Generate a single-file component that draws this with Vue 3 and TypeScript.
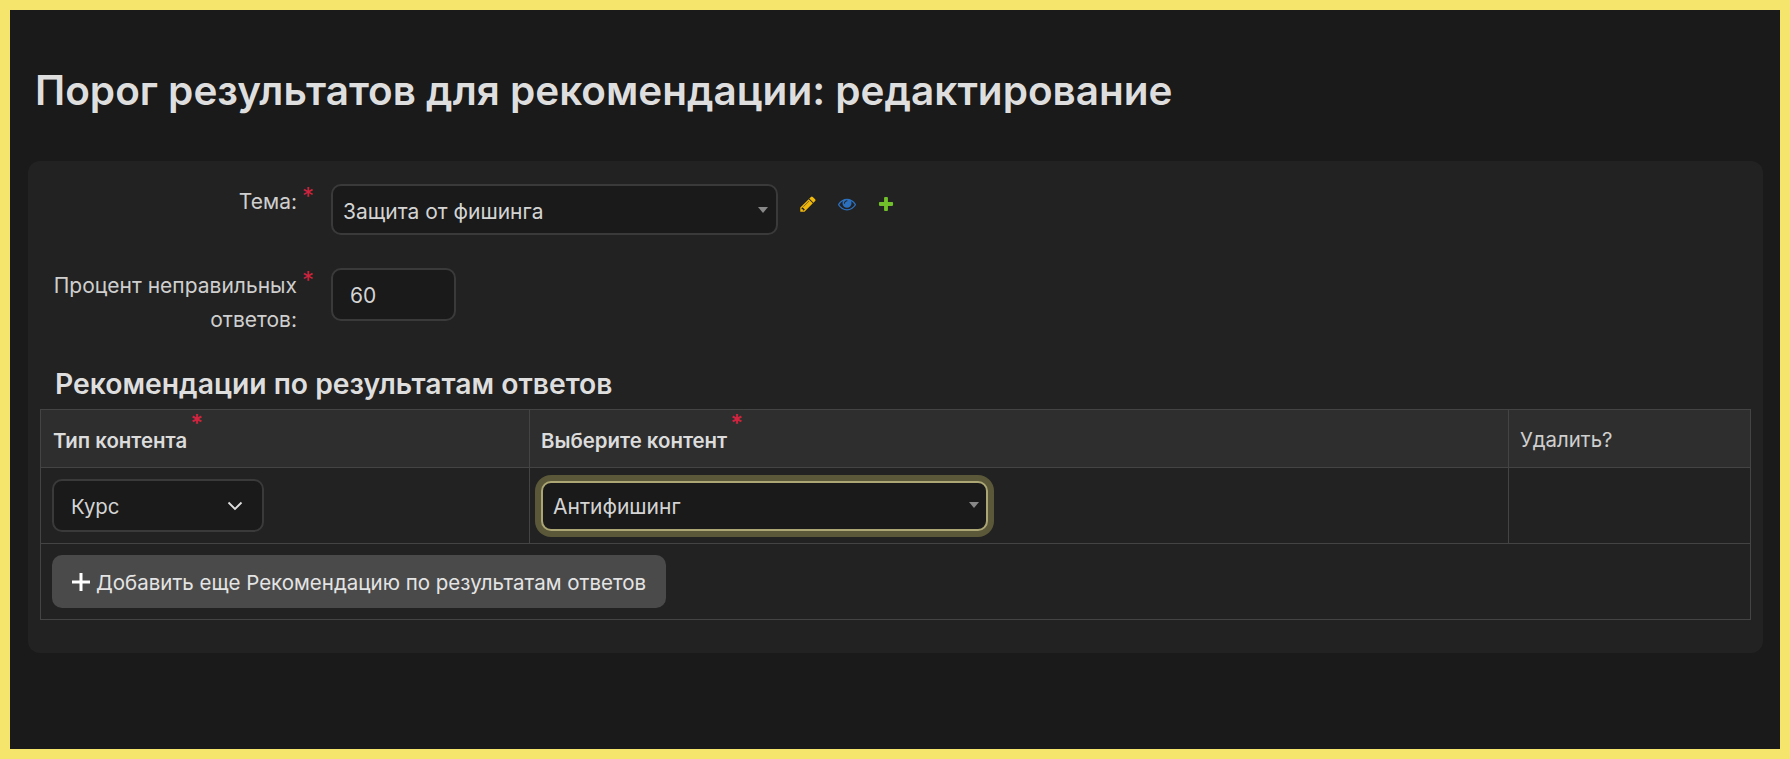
<script setup lang="ts">
const title = 'Порог результатов для рекомендации: редактирование'
</script>

<template>
  <div class="page">
    <h1 class="title">{{ title }}</h1>
    <form class="card" @submit.prevent>
      <div class="field topic">
        <label class="label"><span>Тема:</span><i class="req">*</i></label>
        <div class="select wide">
          <span>Защита от фишинга</span>
          <b class="caret"></b>
        </div>
        <div class="links">
          <svg viewBox="0 0 1792 1792" class="icon"><path fill="#efb80b" d="M491 1536l91-91-235-235-91 91v107h128v128h107zm523-928q0-22-22-22-10 0-17 7l-542 542q-7 7-7 17 0 22 22 22 10 0 17-7l542-542q7-7 7-17zm-54-192l416 416-832 832h-416v-416zm683 96q0 53-37 90l-166 166-416-416 166-165q36-38 90-38 53 0 91 38l235 234q37 39 37 91z"/></svg>
          <svg viewBox="0 0 1792 1792" class="icon"><path fill="#2b70bf" d="M1664 960q-152-236-381-353 61 104 61 225 0 185-131.5 316.5t-316.5 131.5-316.5-131.5-131.5-316.5q0-121 61-225-229 117-381 353 133 205 333.5 326.5t434.5 121.5 434.5-121.5 333.5-326.5zm-720-384q0-20-14-34t-34-14q-125 0-214.5 89.5t-89.5 214.5q0 20 14 34t34 14 34-14 14-34q0-86 61-147t147-61q20 0 34-14t14-34zm848 384q0 34-20 69-140 230-376.5 368.5t-499.5 138.5-499.5-139-376.5-368q-20-35-20-69t20-69q140-229 376.5-368t499.5-139 499.5 139 376.5 368q20 35 20 69z"/></svg>
          <svg viewBox="0 0 1792 1792" class="icon"><path fill="#70bf2b" d="M1600 796v192q0 40-28 68t-68 28h-416v416q0 40-28 68t-68 28h-192q-40 0-68-28t-28-68v-416h-416q-40 0-68-28t-28-68v-192q0-40 28-68t68-28h416v-416q0-40 28-68t68-28h192q40 0 68 28t28 68v416h416q40 0 68 28t28 68z"/></svg>
        </div>
      </div>
      <div class="field percent">
        <label class="label"><span>Процент неправильных ответов:</span><i class="req">*</i></label>
        <div class="number">60</div>
      </div>

      <h2 class="subtitle">Рекомендации по результатам ответов</h2>
      <table class="grid">
        <colgroup>
          <col class="c1" />
          <col class="c2" />
          <col />
        </colgroup>
        <thead>
          <tr>
            <th class="strong"><span class="th-wrap">Тип контента<i class="req th-req">*</i></span></th>
            <th class="strong"><span class="th-wrap">Выберите контент<i class="req th-req">*</i></span></th>
            <th>Удалить?</th>
          </tr>
        </thead>
        <tbody>
          <tr class="row">
            <td>
              <div class="native">
                <span>Курс</span>
                <svg class="chevron" viewBox="0 0 16 10"><path d="M1.5 1.5 8 8l6.5-6.5" fill="none" stroke="#dedede" stroke-width="1.8" /></svg>
              </div>
            </td>
            <td>
              <div class="select focused">
                <span>Антифишинг</span>
                <b class="caret"></b>
              </div>
            </td>
            <td></td>
          </tr>
          <tr class="add-row">
            <td colspan="3">
              <button type="button" class="add">
                <svg class="plus" viewBox="0 0 20 20"><path d="M10 1v18M1 10h18" stroke="#fff" stroke-width="3" fill="none" /></svg>
                <span class="add-text">Добавить еще Рекомендацию по результатам ответов</span>
              </button>
            </td>
          </tr>
        </tbody>
      </table>
    </form>
  </div>
</template>

<style>
html, body { margin: 0; background: #1a1a1a; }
</style>

<style scoped>
.page {
  box-sizing: border-box;
  width: 1790px;
  height: 759px;
  border: 10px solid #f6e56c;
  background: #1a1a1a;
  padding: 0 17px 0 18px;
  font-family: Inter, "Noto Sans", sans-serif;
  font-size: 21px;
  color: #d4d4d4;
  overflow: hidden;
}
.title {
  margin: 0 0 0 7px;
  padding-top: 57px;
  height: 151px;
  box-sizing: border-box;
  font-size: 40.5px;
  line-height: 48px;
  font-weight: 600;
  color: #dedede;
}
.card {
  background: #222;
  border-radius: 12px;
  height: 492px;
  box-sizing: border-box;
  padding: 23px 12px 0;
}
.field { display: flex; align-items: flex-start; }
.label {
  width: 291px;
  flex: none;
  display: flex;
  justify-content: flex-end;
  text-align: right;
  line-height: 34px;
  padding-top: 1px;
  color: #cfcfcf;
}
.label span { display: block; max-width: 250px; }
.req {
  font-style: normal;
  color: #d0233f;
  font-size: 24px;
  line-height: 24px;
  width: 34px;
  flex: none;
  padding-left: 5px;
  box-sizing: border-box;
  text-align: left;
}
.select, .native, .number {
  box-sizing: border-box;
  background: #1a1a1a;
  border: 2px solid #3a3a3a;
  border-radius: 10px;
  display: flex;
  align-items: center;
  color: #d4d4d4;
}
.select { position: relative; padding-left: 10px; }
.wide { width: 447px; height: 51px; padding-top: 3px; }
.caret {
  position: absolute;
  right: 8px;
  top: 50%;
  margin-top: -3px;
  border-left: 5.5px solid transparent;
  border-right: 5.5px solid transparent;
  border-top: 6px solid #888;
}
.links {
  display: flex;
  gap: 21px;
  margin: 11px 0 0 21px;
}
.icon { width: 18px; height: 18px; display: block; }
.percent { margin-top: 33px; }
.number {
  width: 125px;
  height: 53px;
  padding: 2px 0 0 17px;
}
.subtitle {
  margin: 0 0 0 15px;
  padding-top: 31px;
  font-size: 28.3px;
  line-height: 32px;
  height: 72px;
  box-sizing: border-box;
  font-weight: 600;
  color: #dedede;
}
.grid {
  border-collapse: collapse;
  table-layout: fixed;
  width: 1711px;
}
.c1 { width: 489px; }
.c2 { width: 979px; }
th, td {
  border: 1px solid #444;
  padding: 0;
  text-align: left;
  vertical-align: middle;
}
th {
  background: #2e2e2e;
  height: 56px;
  font-weight: 400;
  font-size: 20.4px;
  padding: 1px 0 0 11px;
  color: #cfcfcf;
}
.strong { font-weight: 600; color: #dcdcdc; padding-top: 3px; height: 54px; }
.strong:first-child { padding-left: 12px; }
.th-wrap { position: relative; display: inline-block; }
.th-req {
  position: absolute;
  left: 100%;
  top: -16px;
  width: auto;
  padding-left: 3px;
}
.row td { height: 75px; padding-left: 11px; }
.native {
  width: 212px;
  height: 53px;
  justify-content: space-between;
  padding: 0 19px 0 17px;
  font-size: 20.4px;
}
.native span { padding-top: 2px; }
.chevron { width: 16px; height: 10px; display: block; }
.focused {
  width: 447px;
  height: 50px;
  padding-top: 2px;
  border: 2px solid #aca674;
  box-shadow: 0 0 0 6px #5b5839;
}
.focused .caret { right: 7px; margin-top: -4px; }
.add-row td { height: 75px; padding-left: 11px; }
.add {
  display: flex;
  align-items: center;
  gap: 5px;
  height: 53px;
  width: 614px;
  box-sizing: border-box;
  padding: 0 0 0 19px;
  background: #4a4a4a;
  border: 0;
  border-radius: 10px;
  color: #e4e4e4;
  font: inherit;
  font-size: 20.5px;
}
.add-text { padding-top: 2px; }
.plus { width: 20px; height: 20px; display: block; }
</style>
